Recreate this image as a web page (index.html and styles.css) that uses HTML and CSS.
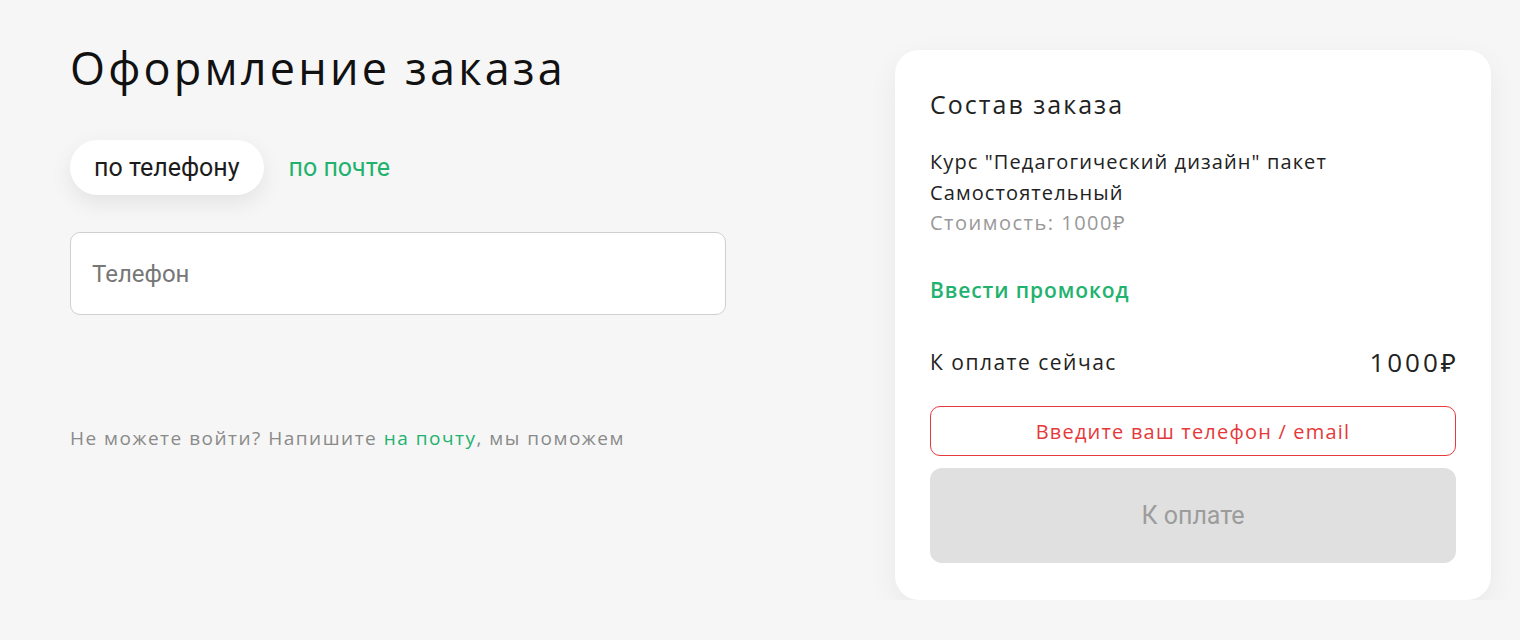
FILE: index.html
```html
<!DOCTYPE html>
<html lang="ru">
<head>
    <meta charset="UTF-8">
    <meta name="viewport" content="width=device-width, initial-scale=1.0">
    <title>Оформление заказа</title>
    <link rel="stylesheet" href="styles.css">
</head>
<body>
    <div class="page">
        <div class="checkout">
            <h1>Оформление заказа</h1>

            <div class="tabs">
                <button class="tab active">по телефону</button>
                <button class="tab">по почте</button>
            </div>

            <div class="field">
                <input type="tel" placeholder="Телефон">
            </div>

            <p class="help">Не можете войти? Напишите <a href="#">на почту</a>, мы поможем</p>
        </div>

        <div class="summary">
            <h2>Состав заказа</h2>

            <div class="item">
                <p>Курс "Педагогический дизайн" пакет<br>Самостоятельный</p>
                <p class="price">Стоимость: 1000₽</p>
            </div>

            <a href="#" class="promo">Ввести промокод</a>

            <div class="total">
                <span>К оплате сейчас</span>
                <span class="sum">1000₽</span>
            </div>

            <div class="notice">Введите ваш телефон / email</div>

            <button class="pay" disabled>К оплате</button>
        </div>
    </div>
</body>
</html>
```

FILE: styles.css
```css
* {
    margin: 0;
    padding: 0;
    box-sizing: border-box;
}

body {
    font-family: 'Open Sans', 'Noto Sans', sans-serif;
    background: #f6f6f6;
    color: #1c1c1c;
}

a {
    color: #21b26e;
    text-decoration: none;
}

.page {
    display: flex;
    justify-content: space-between;
    align-items: flex-start;
    padding: 40px 29px 0 70px;
}

.checkout {
    width: 656px;
}

.checkout h1 {
    font-size: 45px;
    font-weight: 400;
    line-height: 56px;
    letter-spacing: 3.2px;
    color: #111;
}

.tabs {
    display: flex;
    align-items: center;
    gap: 25px;
    margin-top: 44px;
}

.tab {
    border: none;
    background: none;
    font-family: Roboto, sans-serif;
    font-size: 25px;
    color: #21b26e;
    cursor: pointer;
}

.tab.active {
    height: 55px;
    padding: 0 24px;
    border-radius: 28px;
    background: white;
    color: #1c1c1c;
    box-shadow: 0 8px 22px rgba(0, 0, 0, 0.08);
}

.field {
    margin-top: 37px;
}

.field input {
    width: 100%;
    height: 83px;
    padding: 0 21px;
    border: 1px solid #cfcfcf;
    border-radius: 10px;
    background: white;
    font-family: Roboto, sans-serif;
    font-size: 24px;
    color: #1c1c1c;
    outline: none;
}

.field input::placeholder {
    color: #777;
}

.help {
    margin-top: 111px;
    font-size: 19px;
    line-height: 24px;
    letter-spacing: 1.5px;
    color: #8a8a8a;
}

.summary {
    width: 596px;
    margin-top: 10px;
    padding: 38px 35px 37px;
    background: white;
    border-radius: 24px;
    box-shadow: 0 10px 30px rgba(0, 0, 0, 0.06);
}

.summary h2 {
    font-size: 25px;
    font-weight: 400;
    line-height: 32px;
    letter-spacing: 2px;
    color: #222;
}

.item {
    margin-top: 26px;
    font-size: 20px;
    line-height: 31px;
    letter-spacing: 1.1px;
    color: #222;
}

.item .price {
    line-height: 30px;
    letter-spacing: 1.5px;
    color: #999;
}

.promo {
    display: block;
    margin-top: 38px;
    font-size: 21px;
    font-weight: 600;
    line-height: 28px;
    letter-spacing: 0.9px;
}

.total {
    display: flex;
    justify-content: space-between;
    align-items: center;
    margin-top: 42px;
    font-size: 21px;
    line-height: 32px;
    letter-spacing: 1.5px;
    color: #222;
}

.total .sum {
    font-size: 26px;
    letter-spacing: 3px;
    margin-right: -3px;
}

.notice {
    display: flex;
    align-items: center;
    justify-content: center;
    height: 50px;
    margin-top: 28px;
    border: 1px solid #e5393b;
    border-radius: 10px;
    font-size: 20px;
    letter-spacing: 1.2px;
    color: #e5393b;
}

.pay {
    display: block;
    width: 100%;
    height: 95px;
    margin-top: 12px;
    border: none;
    border-radius: 12px;
    background: #e0e0e0;
    font-family: Roboto, sans-serif;
    font-size: 25px;
    color: #9c9c9c;
}
```
